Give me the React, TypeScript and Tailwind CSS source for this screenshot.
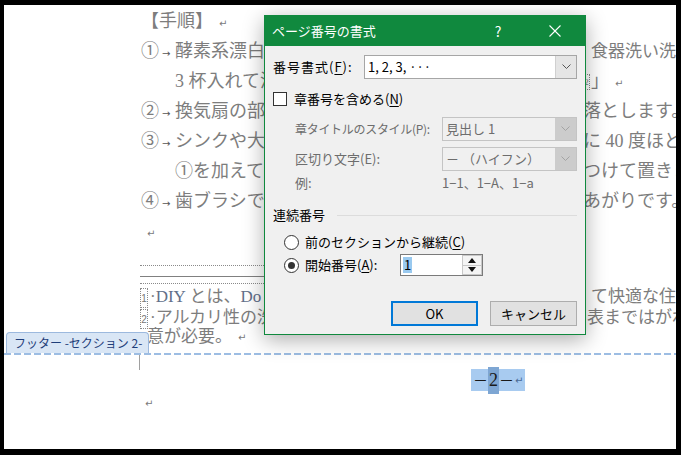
import React from "react";

const Ret = () => (
  <span className="ml-[6px] font-['DejaVu_Sans',sans-serif] text-[10px] text-[#7a7a7a]">↵</span>
);

const Tab = () => (
  <span className="inline-block w-[16px] pl-[3px] font-['DejaVu_Sans',sans-serif] text-[10px] text-[#555]">→</span>
);

function Line({ left, right }: { left: React.ReactNode; right?: React.ReactNode }) {
  return (
    <div className="grid h-[30px] grid-cols-[442px_1fr] items-center">
      <div className="overflow-hidden whitespace-nowrap">{left}</div>
      <div className="overflow-hidden whitespace-nowrap">{right}</div>
    </div>
  );
}

function Chevron({ color }: { color: string }) {
  return (
    <svg width="9" height="6" viewBox="0 0 9 6">
      <polyline points="0.5,0.5 4.5,4.5 8.5,0.5" fill="none" stroke={color} strokeWidth="1" />
    </svg>
  );
}

function Combo({ text, disabled, width }: { text: string; disabled?: boolean; width: string }) {
  return (
    <div
      className={
        "ml-auto flex h-full shrink-0 items-stretch border " +
        width +
        (disabled ? " border-[#c4c4c4] bg-[#f0f0f0] text-[#6d6d6d]" : " border-[#a6a6a6] bg-white text-black")
      }
    >
      <div className="flex flex-1 items-center pl-[3px] whitespace-nowrap">{text}</div>
      <div
        className={
          "flex w-[21px] items-center justify-center " +
          (disabled ? "bg-[#cccccc]" : "border-l border-[#d0d0d0] bg-[#e5e5e5]")
        }
      >
        <Chevron color={disabled ? "#a3a3a3" : "#555"} />
      </div>
    </div>
  );
}

function Radio({ checked }: { checked?: boolean }) {
  return (
    <div className="flex h-[15px] w-[15px] shrink-0 items-center justify-center rounded-full border border-[#333] bg-white">
      {checked && <div className="h-[7px] w-[7px] rounded-full bg-[#333]" />}
    </div>
  );
}

function Dialog() {
  return (
    <div className="absolute left-[260px] top-[10px] flex h-[320px] w-[322px] flex-col border border-[#10893e] bg-[#f0f0f0] font-['Noto_Sans_CJK_JP',sans-serif] text-[13px] text-black shadow-[0_5px_20px_rgba(0,0,0,0.32)]">
      <div className="flex h-[30px] items-center bg-[#10893e] pl-[7px] text-white">
        <span className="text-[13px]">ページ番号の書式</span>
        <div className="ml-auto flex h-full items-center gap-[11px] pr-[7px]">
          <div className="flex w-[46px] justify-center text-[14px]">?</div>
          <div className="flex w-[46px] justify-center">
            <svg width="12" height="12" viewBox="0 0 12 12">
              <line x1="0.5" y1="0.5" x2="11.5" y2="11.5" stroke="white" strokeWidth="1.1" />
              <line x1="11.5" y1="0.5" x2="0.5" y2="11.5" stroke="white" strokeWidth="1.1" />
            </svg>
          </div>
        </div>
      </div>
      <div className="flex flex-1 flex-col px-[8px]">
        <div className="mt-[9px] flex h-[24px] items-center">
          <span className="whitespace-nowrap tracking-[1px]">
            番号書式(<span className="underline underline-offset-2">F</span>):
          </span>
          <Combo text="1, 2, 3, ···" width="w-[213px]" />
        </div>
        <div className="mt-[9px] flex h-[22px] items-center gap-[7px]">
          <div className="h-[14px] w-[14px] border border-[#333] bg-white" />
          <span className="whitespace-nowrap">
            章番号を含める(<span className="underline underline-offset-2">N</span>)
          </span>
        </div>
        <div className="mt-[7px] flex h-[24px] items-center pl-[22px] text-[#6d6d6d]">
          <span className="whitespace-nowrap text-[12px] tracking-[-0.3px]">章タイトルのスタイル(P):</span>
          <Combo text="見出し 1" width="w-[135px]" disabled />
        </div>
        <div className="mt-[6px] flex h-[24px] items-center pl-[22px] text-[#6d6d6d]">
          <span className="whitespace-nowrap">区切り文字(E):</span>
          <Combo text="－ （ハイフン）" width="w-[135px]" disabled />
        </div>
        <div className="mt-[3px] flex h-[18px] items-center pl-[22px] text-[#6d6d6d]">
          <span className="w-[147px]">例:</span>
          <span className="whitespace-nowrap">1−1、1−A、1−a</span>
        </div>
        <div className="mt-[14px] flex h-[18px] items-center">
          <span className="whitespace-nowrap">連続番号</span>
          <div className="ml-[12px] h-px flex-1 bg-[#dcdcdc]" />
        </div>
        <div className="mt-[8px] flex h-[20px] items-center gap-[6px] pl-[11px]">
          <Radio />
          <span className="whitespace-nowrap">
            前のセクションから継続(<span className="underline underline-offset-2">C</span>)
          </span>
        </div>
        <div className="mt-[2px] flex h-[22px] items-center pl-[11px]">
          <Radio checked />
          <span className="ml-[6px] w-[95px] whitespace-nowrap">
            開始番号(<span className="underline underline-offset-2">A</span>):
          </span>
          <div className="flex h-full w-[83px] border border-[#7a7a7a] bg-white">
            <div className="flex flex-1 items-center pl-[2px]">
              <span className="bg-[#99c9ef] px-[1px] leading-[16px]">1</span>
            </div>
            <div className="flex w-[20px] flex-col">
              <div className="flex flex-1 items-center justify-center border border-[#c8c8c8] bg-[#f4f4f4]">
                <svg width="8" height="5" viewBox="0 0 8 5">
                  <polygon points="0,5 4,0 8,5" fill="#111" />
                </svg>
              </div>
              <div className="flex flex-1 items-center justify-center border border-t-0 border-[#c8c8c8] bg-[#f4f4f4]">
                <svg width="8" height="5" viewBox="0 0 8 5">
                  <polygon points="0,0 8,0 4,5" fill="#111" />
                </svg>
              </div>
            </div>
          </div>
        </div>
        <div className="mt-[25px] flex h-[25px] justify-end gap-[12px]">
          <div className="flex w-[87px] items-center justify-center border-2 border-[#0078d7] bg-[#e1e1e1]">OK</div>
          <div className="flex w-[87px] items-center justify-center border border-[#adadad] bg-[#e1e1e1]">キャンセル</div>
        </div>
      </div>
    </div>
  );
}

export default function App() {
  const fn = (n: string) => (
    <span className="mr-[2px] inline-flex h-[20px] w-[8px] items-center justify-center border border-dotted border-[#8a8a8a] align-middle font-['Liberation_Sans',sans-serif] text-[10px] text-[#777]">
      {n}
    </span>
  );
  return (
    <div className="h-[455px] w-[681px] overflow-hidden bg-black pl-[4px] pt-[5px]">
      <div className="relative h-[444px] w-[672px] overflow-hidden bg-white font-['Liberation_Serif','Noto_Sans_CJK_JP',serif] text-[18px] text-[#7d7d7d]">
        <div className="pl-[137px] pt-[1px]">
          <Line left={<>【手順】<Ret /></>} />
          <Line
            left={<>①<Tab />酵素系漂白剤を大さじ</>}
            right={<span className="ml-[8px] text-[17px]">食器洗い洗剤</span>}
          />
          <Line
            left={<><span className="inline-block w-[34px]" />3 杯入れて混ぜ</>}
            right={
              <>
                <span className="inline-flex h-[16px] w-[7px] items-center justify-center border border-dotted border-[#8a8a8a] align-middle text-[9px]">2</span>
                <span className="ml-[1px]">」</span>
                <Ret />
              </>
            }
          />
          <Line left={<>②<Tab />換気扇の部品を</>} right={<>落とします。</>} />
          <Line left={<>③<Tab />シンクや大きめ</>} right={<>に 40 度ほど</>} />
          <Line left={<><span className="inline-block w-[34px]" />①を加えてよく</>} right={<>つけて置きま</>} />
          <Line left={<>④<Tab />歯ブラシでこす</>} right={<>あがりです。</>} />
          <Line left={<Ret />} />
        </div>

        <div className="pl-[136px] text-[17px]">
          <div className="mt-[19px] w-[420px] border-t border-dotted border-[#8a8a8a]" />
          <div className="mt-[10px] w-[300px] border-t border-[#808080]" />
          <div className="mt-[6px] w-[420px] border-t border-dotted border-[#8a8a8a]" />
          <div className="mt-[2px] grid h-[22px] grid-cols-[447px_1fr] items-center">
            <div className="overflow-hidden whitespace-nowrap">
              {fn("1")}·<span className="text-[#62708a]">DIY</span> とは、<span className="text-[#62708a]">Do it</span>
            </div>
            <div className="overflow-hidden whitespace-nowrap">
              <span className="ml-[4px]">て快適な住</span>
            </div>
          </div>
          <div className="grid h-[20px] grid-cols-[447px_1fr] items-center">
            <div className="overflow-hidden whitespace-nowrap">
              {fn("2")}·アルカリ性の洗剤
            </div>
            <div className="overflow-hidden whitespace-nowrap">表まではがれ</div>
          </div>
          <div className="flex h-[18px] items-center whitespace-nowrap pl-[7px]">
            意が必要。<Ret />
          </div>
        </div>

        <div className="mt-[7px] h-[2px] w-full bg-[repeating-linear-gradient(90deg,#9dbde3_0_7px,transparent_7px_10px)]" />

        <div className="flex items-start">
          <div className="ml-[135px] h-[15px] w-px bg-[#a0a0a0]" />
          <div className="ml-[331px] mt-[14px] flex h-[22px] items-center bg-[#a8cbf0] px-[2px] text-[#1a1a1a]">
            <span className="font-['Noto_Sans_CJK_JP',sans-serif] text-[15px]">－</span>
            <span className="bg-[#7ea6d3] px-[1px]">2</span>
            <span className="font-['Noto_Sans_CJK_JP',sans-serif] text-[15px]">－</span>
            <span className="ml-[1px] font-['DejaVu_Sans',sans-serif] text-[10px] text-[#4a6a95]">↵</span>
          </div>
        </div>
        <div className="mt-[4px] flex h-[16px] items-center pl-[135px]">
          <Ret />
        </div>

        <div className="absolute left-[2px] top-[327px] flex h-[21px] w-[143px] items-center rounded-t-[4px] border border-b-0 border-[#9cb9de] bg-[#d9e6f5] pl-[7px] font-['Noto_Sans_CJK_JP',sans-serif] text-[12px] whitespace-nowrap text-[#1f3e7a]">
          フッター -セクション 2-
        </div>

        <Dialog />
      </div>
    </div>
  );
}
